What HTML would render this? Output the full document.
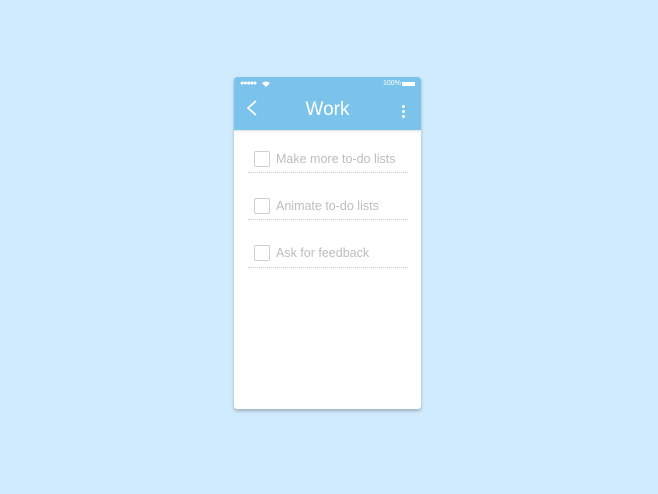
<!DOCTYPE html>
<html><head><style>
body{margin:0;width:658px;height:494px;background:#d0ebfd;position:relative;overflow:hidden;font-family:"Liberation Sans",sans-serif}
.card{position:absolute;left:234px;top:77px;width:187px;height:332px;background:#fff;border-radius:3px;box-shadow:0 2px 3px rgba(0,0,0,.25);overflow:hidden}
.hdr{position:absolute;left:0;top:0;width:187px;height:53px;background:#7cc3ec;box-shadow:0 1px 2px rgba(0,0,0,.15)}
.sb{position:absolute;top:3px;font-size:7px;color:#fff}
.title{position:absolute;left:0;width:187px;top:22px;text-align:center;color:#fff;font-size:19px}
.row{position:absolute;left:14px;width:160px;height:1px;border-bottom:1px dotted #ccc}
.cb{position:absolute;left:20px;width:14px;height:14px;border:1px solid #d0d0d0;border-radius:2px}
.t{position:absolute;left:42px;font-size:12.5px;color:#bdbdbd}
</style></head><body>
<div class="card">
<div class="hdr">
<div class="sb" style="left:6px;letter-spacing:-1px">●●●●●</div>
<svg style="position:absolute;left:28px;top:4px" width="8" height="6" viewBox="0 0 8 6"><path d="M0 2 Q4 -1 8 2 L4 6Z" fill="#fff"/></svg>
<div class="sb" style="left:149px">100%</div>
<div style="position:absolute;left:168px;top:5px;width:13px;height:4px;background:#fff"></div>
<svg style="position:absolute;left:12px;top:23px" width="12" height="16" viewBox="0 0 12 16"><path d="M10 1 L2 8 L10 15" stroke="#fff" stroke-width="1.6" fill="none"/></svg>
<div class="title">Work</div>
<div style="position:absolute;left:168px;top:28px;width:3px;height:3px;border-radius:50%;background:#fff;box-shadow:0 5px 0 #fff,0 10px 0 #fff"></div>
</div>
<div class="cb" style="top:74px"></div><div class="t" style="top:75px">Make more to-do lists</div><div class="row" style="top:94px"></div>
<div class="cb" style="top:121px"></div><div class="t" style="top:122px">Animate to-do lists</div><div class="row" style="top:141px"></div>
<div class="cb" style="top:168px"></div><div class="t" style="top:169px">Ask for feedback</div><div class="row" style="top:189px"></div>
</div>
</body></html>
